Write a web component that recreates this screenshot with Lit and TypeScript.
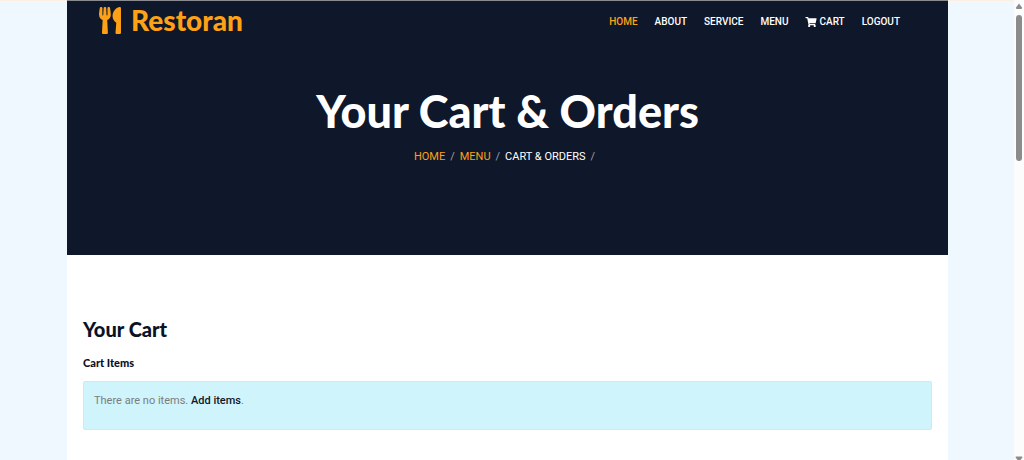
import { LitElement, html, css } from "lit";
import { customElement } from "lit/decorators.js";

const UTENSILS =
  "M207.9 15.2c.8 4.7 16.1 94.5 16.1 128.8 0 52.3-27.8 89.6-68.9 104.6L168 486.7c.7 13.7-10.2 25.3-24 25.3H80c-13.7 0-24.7-11.5-24-25.3l12.9-238.1C27.7 233.6 0 196.2 0 144 0 109.6 15.3 19.9 16.1 15.2 19.3-5.1 61.4-5.4 64 16.3v141.2c1.3 3.4 15.1 3.2 16 0 1.4-25.3 7.9-139.2 8-141.8 3.3-20.8 44.7-20.8 47.9 0 .2 2.7 6.6 116.5 8 141.8.9 3.2 14.8 3.4 16 0V16.3c2.6-21.6 44.8-21.4 48-1.1zm119.2 285.7l-15 185.1c-1.2 14 9.9 26 23.9 26h56c13.3 0 24-10.7 24-24V24c0-13.2-10.7-24-24-24-82.5 0-221.4 178.5-64.9 300.9z";
const CART =
  "M528.12 301.319l47.273-208C578.806 78.301 567.391 64 551.99 64H159.208l-9.166-44.81C147.758 8.021 137.93 0 126.529 0H24C10.745 0 0 10.745 0 24v16c0 13.255 10.745 24 24 24h69.883l70.248 343.435C147.325 417.1 136 435.222 136 456c0 30.928 25.072 56 56 56s56-25.072 56-56c0-15.674-6.447-29.835-16.824-40h209.647C430.447 426.165 424 440.326 424 456c0 30.928 25.072 56 56 56s56-25.072 56-56c0-22.172-12.888-41.332-31.579-50.405l5.517-24.276c3.413-15.018-8.002-29.319-23.403-29.319H218.117l-6.545-32h293.145c11.206 0 20.92-7.754 23.403-18.681z";

@customElement("site-header")
class SiteHeader extends LitElement {
  static styles = css`
    :host {
      display: block;
      background: #0f172b;
      border-top: 1px solid #8a8b90;
      padding-bottom: 90px;
    }
    a {
      color: inherit;
      text-decoration: none;
    }
    .bar {
      display: flex;
      justify-content: space-between;
      align-items: center;
      height: 38px;
      padding: 0 48px 0 32px;
    }
    .brand {
      display: flex;
      align-items: center;
      gap: 10px;
      color: #fea116;
      font: 900 28px/38px Lato, sans-serif;
    }
    .fork {
      height: 27px;
      width: 22px;
      fill: currentColor;
    }
    .links {
      display: flex;
      gap: 17px;
      padding-top: 3px;
      color: #fff;
      font-size: 10px;
      font-weight: 500;
    }
    .links a {
      display: flex;
      align-items: center;
      gap: 2px;
    }
    .links .active,
    .crumbs a {
      color: #fea116;
    }
    .cart {
      height: 10px;
      width: 12px;
      fill: currentColor;
    }
    h1 {
      margin: 46px 0 0;
      text-align: center;
      color: #fff;
      font: 900 45px/52px Lato, sans-serif;
    }
    .crumbs {
      display: flex;
      justify-content: center;
      gap: 5px;
      margin: 12px 0 0;
      padding: 0 6px 0 0;
      list-style: none;
      color: #fff;
    }
    .crumbs li {
      display: flex;
      gap: 5px;
    }
    .crumbs li::after {
      content: "/";
      color: #a0a1a6;
    }
  `;

  render() {
    return html`
      <nav class="bar" aria-label="Main">
        <a class="brand" href="#">
          <svg class="fork" viewBox="0 0 416 512" aria-hidden="true"><path d=${UTENSILS} /></svg>
          <span>Restoran</span>
        </a>
        <div class="links">
          <a class="active" href="#">HOME</a>
          <a href="#">ABOUT</a>
          <a href="#">SERVICE</a>
          <a href="#">MENU</a>
          <a href="#">
            <svg class="cart" viewBox="0 0 576 512" aria-hidden="true"><path d=${CART} /></svg>
            CART
          </a>
          <a href="#">LOGOUT</a>
        </div>
      </nav>
      <h1>Your Cart &amp; Orders</h1>
      <ol class="crumbs">
        <li><a href="#">HOME</a></li>
        <li><a href="#">MENU</a></li>
        <li>CART &amp; ORDERS</li>
      </ol>
    `;
  }
}

@customElement("cart-section")
class CartSection extends LitElement {
  static styles = css`
    :host {
      display: block;
      padding: 60px 16px 24px;
      color: #0a1226;
    }
    h2 {
      margin: 0;
      font: 900 20px/28px Lato, sans-serif;
    }
    h3 {
      margin: 12px 0 10px;
      font: 900 11px/16px Lato, sans-serif;
    }
    .notice {
      padding: 11px 10px 20px;
      border: 1px solid #c2eff7;
      border-radius: 2px;
      background: #cff4fc;
      color: #7c7c7c;
    }
    p {
      margin: 0;
    }
    a {
      color: #0f172b;
      font-weight: 500;
      text-decoration: none;
    }
  `;

  render() {
    return html`
      <h2>Your Cart</h2>
      <h3>Cart Items</h3>
      <div class="notice">
        <p>There are no items. <a href="#">Add items</a>.</p>
      </div>
    `;
  }
}

@customElement("app-root")
class AppRoot extends LitElement {
  static styles = css`
    :host {
      display: flex;
      height: 100vh;
      overflow: hidden;
      background: #f0f8ff;
      font: 400 11px/16px Roboto, sans-serif;
    }
    .view {
      flex: 1;
      padding: 0 66px 0 67px;
      background: linear-gradient(#fbeee2, #fbeee2) top / 100% 1px no-repeat;
    }
    .page {
      min-height: 100%;
      background: #fff;
    }
    .scroll {
      display: flex;
      flex-direction: column;
      align-items: center;
      width: 10px;
      background: #fcfcfc;
    }
    .arrow {
      width: 8px;
      height: 15px;
      fill: #8b8b8b;
    }
    .track {
      flex: 1;
      width: 6px;
    }
    .thumb {
      height: 34%;
      border-radius: 3px;
      background: #8b8b8b;
    }
  `;

  render() {
    return html`
      <div class="view">
        <main class="page">
          <site-header></site-header>
          <cart-section></cart-section>
        </main>
      </div>
      <div class="scroll" aria-hidden="true">
        <svg class="arrow" viewBox="0 0 8 15"><path d="M4 3.5 7 7.5Q7.400 9 6 9H2Q.600 9 1 7.500Z" /></svg>
        <div class="track"><div class="thumb"></div></div>
        <svg class="arrow" viewBox="0 -12 8 15"><path d="M1 -0.500H7Q7.800 0 7 1L4 5 1 1Q.200 0 1 -0.500Z" /></svg>
      </div>
    `;
  }
}
